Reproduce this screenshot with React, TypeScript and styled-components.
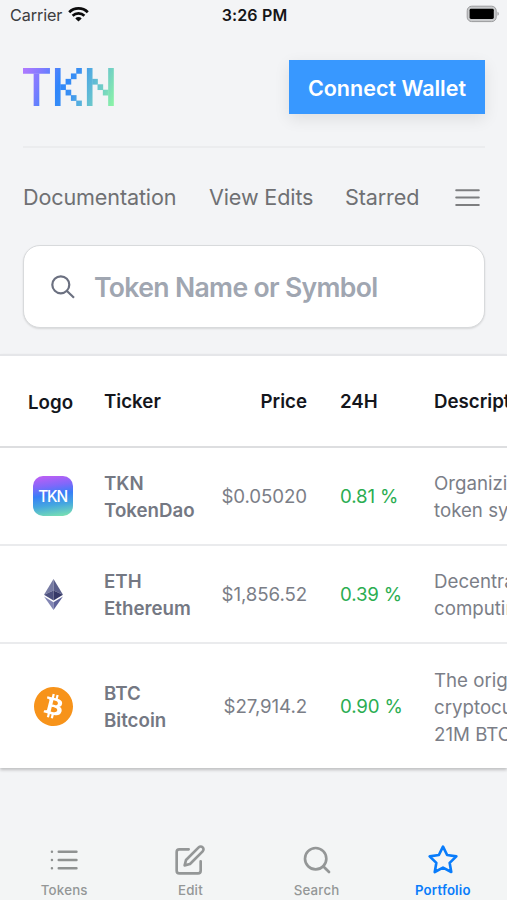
import React from "react";
import styled, { createGlobalStyle } from "styled-components";
import { FiEdit, FiSearch, FiStar } from "react-icons/fi";
import { SiBitcoin } from "react-icons/si";

const GlobalStyle = createGlobalStyle`
  *, *::before, *::after { box-sizing: border-box; }
  html, body { margin: 0; padding: 0; overflow: hidden; }
  body { background: #f3f4f6; font-family: Inter, "Liberation Sans", sans-serif; }
`;

const Screen = styled.div`
  width: 507px;
  height: 900px;
  display: flex;
  flex-direction: column;
  overflow: hidden;
  background: #f3f4f6;
`;

const StatusBar = styled.header`
  height: 30px;
  flex: none;
  display: grid;
  grid-template-columns: 1fr auto 1fr;
  align-items: center;
  padding: 0 8px 0 10px;
`;

const Carrier = styled.span`
  display: flex;
  align-items: center;
  gap: 6px;
  font-size: 16.2px;
  line-height: 20px;
  letter-spacing: -0.1px;
  color: #3c3d40;
`;

const Clock = styled.span`
  font-size: 16px;
  font-weight: 600;
  line-height: 20px;
  letter-spacing: 0.15px;
  color: #151517;
`;

const BatterySlot = styled.span`
  display: flex;
  justify-content: flex-end;
  margin-top: -2px;
`;

const TopArea = styled.section`
  flex: none;
  height: 324px;
  padding: 30px 22px 0 23px;
  display: flex;
  flex-direction: column;
`;

const Brand = styled.div`
  display: flex;
  justify-content: space-between;
  align-items: center;
  height: 54px;
`;

const ConnectButton = styled.button`
  width: 196px;
  height: 54px;
  padding: 2px 0 0;
  border: 0;
  background: #3898ff;
  box-shadow: 0 5px 15px rgba(0, 0, 0, 0.09);
  color: #fff;
  font: 600 21.5px/27px Inter, sans-serif;
  white-space: nowrap;
`;

const Rule = styled.hr`
  width: 100%;
  height: 2px;
  margin: 32px 0 0;
  border: 0;
  background: #ebecee;
`;

const Nav = styled.nav`
  display: flex;
  align-items: center;
  height: 32px;
  margin-top: 33px;
  padding-right: 4px;
`;

const NavLink = styled.a<{ $width: number }>`
  width: ${(p) => p.$width}px;
  font-size: 21.6px;
  line-height: 32px;
  color: #6f7073;
  letter-spacing: -0.14px;
  white-space: nowrap;
`;

const MenuButton = styled.span`
  display: flex;
  margin-left: auto;
  padding: 1px 1px 0 0;
`;

const SearchBox = styled.label`
  display: flex;
  align-items: center;
  height: 83px;
  margin-top: 32px;
  padding-left: 27px;
  gap: 19px;
  background: #fff;
  border: 1.5px solid #d8dadc;
  border-radius: 17px;
  box-shadow: 0 1px 2px rgba(0, 0, 0, 0.12);
`;

const SearchInput = styled.input`
  width: 340px;
  padding: 0;
  border: 0;
  outline: 0;
  background: transparent;
  font: 600 26.6px/36px Inter, sans-serif;
  letter-spacing: -0.66px;
  &::placeholder { color: #a0a6b1; opacity: 1; }
`;

const Table = styled.section`
  flex: none;
  border-top: 2px solid #e5e6e9;
  background: #fff;
  box-shadow: 0 2px 3px rgba(0, 0, 0, 0.22);
`;

const Row = styled.div<{ $height: number; $line?: string }>`
  display: grid;
  grid-template-columns: 104px 110px 93px 94px 190px;
  align-items: center;
  height: ${(p) => p.$height}px;
  border-bottom: ${(p) => (p.$line ? `2px solid ${p.$line}` : "0")};
  font-size: 18.7px;
  line-height: 27px;
  color: #7b7e87;
  white-space: nowrap;
`;

const HeadCell = styled.span<{ $kind?: "logo" | "price" | "change" }>`
  color: #14161c;
  font-weight: 600;
  text-align: ${(p) => (p.$kind === "price" ? "right" : "left")};
  padding-left: ${(p) => (p.$kind === "logo" ? 28 : p.$kind === "change" ? 33 : 0)}px;
  padding-top: ${(p) => (p.$kind === "logo" ? 2 : 0)}px;
`;

const LogoCell = styled.span`
  display: flex;
  justify-content: center;
  width: 106px;
`;

const Ticker = styled.span`
  display: flex;
  flex-direction: column;
  padding-top: 2px;
  font-weight: 600;
  color: #747883;
`;

const Price = styled.span`
  text-align: right;
  letter-spacing: -0.1px;
`;

const Change = styled.span`
  padding-left: 33px;
  color: #2bad51;
  letter-spacing: -0.15px;
`;

const Description = styled.span`
  padding: 2px 0 0 33px;
  white-space: pre;
`;

const TabBar = styled.nav`
  flex: none;
  display: grid;
  grid-template-columns: repeat(4, 126.2px);
  justify-content: center;
  height: 60px;
  margin-top: auto;
  background: #f3f5f5;
`;

const Tab = styled.a<{ $active?: boolean }>`
  display: flex;
  flex-direction: column;
  align-items: center;
  padding-top: 3px;
  color: ${(p) => (p.$active ? "#087cfb" : "#949797")};
  font-size: ${(p) => (p.$active ? 13.2 : 13.3)}px;
  font-weight: ${(p) => (p.$active ? 600 : 500)};
  line-height: 16px;
  letter-spacing: 0.2px;
`;

const TabIcon = styled.span`
  display: flex;
  align-items: center;
  justify-content: center;
  height: 33px;
  margin-bottom: 6px;
`;

/* Filled cells of the wordmark on a 17 by 7 grid: column, row, width, height. */
const LOGO_CELLS = [
  [0, 0, 5, 1], [2, 1, 1, 6],
  [6, 0, 1, 7], [10, 0, 1, 1], [9, 1, 1, 1], [8, 2, 1, 1], [7, 3, 1, 1],
  [8, 4, 1, 1], [9, 5, 1, 1], [10, 6, 1, 1],
  [12, 0, 1, 7], [13, 2, 1, 1], [14, 3, 1, 1], [15, 4, 1, 1], [16, 0, 1, 7],
];

const Wordmark = () => (
  <svg width="90.5" height="38" viewBox="0 0 17 7" preserveAspectRatio="none" aria-label="TKN">
    <defs>
      <linearGradient id="mark" x1="0" y1="0" x2="17" y2="7" gradientUnits="userSpaceOnUse">
        <stop offset="0" stopColor="#b279ff" />
        <stop offset="0.2" stopColor="#7d7cff" />
        <stop offset="0.4" stopColor="#2f86fb" />
        <stop offset="0.55" stopColor="#3a90f2" />
        <stop offset="0.65" stopColor="#52ace0" />
        <stop offset="0.82" stopColor="#70cdc7" />
        <stop offset="1" stopColor="#8cf5a5" />
      </linearGradient>
    </defs>
    {LOGO_CELLS.map(([x, y, w, h]) => (
      <rect key={`${x}-${y}`} x={x} y={y} width={w + 0.06} height={h + 0.06} fill="url(#mark)" />
    ))}
  </svg>
);

const TokenBadge = styled.span`
  display: flex;
  align-items: center;
  justify-content: center;
  width: 40px;
  height: 40px;
  border-radius: 10px;
  background: linear-gradient(172deg, #b660f5 6%, #8068fa 27%, #377ff7 47%, #45a7df 70%, #7be3b0 98%);
  color: #fff;
  font-size: 15.4px;
  font-weight: 500;
  letter-spacing: -1.2px;
  text-indent: -1px;
`;

const Ethereum = () => (
  <svg width="19" height="31" viewBox="0 0 19 31">
    <path d="M9.5 0 0 15.7l9.5-4.3z" fill="#777ba3" />
    <path d="M9.5 0 19 15.7l-9.5-4.3z" fill="#5a5e8a" />
    <path d="m0 15.7 9.5 5.7v-10z" fill="#4d517f" />
    <path d="m19 15.7-9.5 5.7v-10z" fill="#363967" />
    <path d="m0 17.6 9.5 5.6V31z" fill="#8286b4" />
    <path d="m19 17.6-9.5 5.6V31z" fill="#5f639a" />
  </svg>
);

const BitcoinDisc = styled.span`
  display: flex;
  border-radius: 50%;
  background: radial-gradient(circle, #fff 60%, transparent 62%);
  color: #f7931a;
`;

const Wifi = () => (
  <svg width="21" height="16" viewBox="0 0 21 16" fill="none" stroke="#0b0b0c">
    <path d="M1.2 5.2a13.3 13.3 0 0 1 18.6 0" strokeWidth="2.8" />
    <path d="M4.6 8.8a8.4 8.4 0 0 1 11.8 0" strokeWidth="2.6" />
    <path d="m10.5 14.6-3.2-3.2a4.6 4.6 0 0 1 6.4 0z" fill="#0b0b0c" stroke="none" />
  </svg>
);

const Battery = () => (
  <svg width="33" height="18" viewBox="0 0 33 18">
    <rect x="1.2" y="1.2" width="29" height="15.4" rx="4.5" fill="#c9cacc" stroke="#9b9c9e" />
    <rect x="3.6" y="3.8" width="24.2" height="10.2" rx="1.4" fill="#000" />
    <path d="M31.4 6.7q1.6.3 1.6 2t-1.6 2z" fill="#a9aaac" />
  </svg>
);

const MenuIcon = () => (
  <svg width="25" height="18" viewBox="0 0 25 18" stroke="#7d7e80" strokeWidth="2" strokeLinecap="round">
    <path d="M1.2 1.2h22.6M1.2 8.6h22.6M1.2 16h22.6" />
  </svg>
);

const Magnifier = () => (
  <svg width="24" height="24" viewBox="0 0 24 24" fill="none" stroke="#6b7080" strokeWidth="2.2">
    <circle cx="9.8" cy="9.8" r="8.5" />
    <path d="m15.7 15.8 7.3 7" />
  </svg>
);

const ListIcon = () => (
  <svg width="28" height="20" viewBox="0 0 28 20" stroke="#8f9291" strokeWidth="2.4" strokeLinecap="round">
    <path d="M8.7 1.8h17.8M8.7 10h17.8M8.7 18.2h17.8M1.9 1.8h.1M1.9 10h.1M1.9 18.2h.1" />
  </svg>
);

const tokens = [
  {
    symbol: "TKN", name: "TokenDao", price: "$0.05020", change: "0.81 %",
    description: "Organizing\ntoken symbols", height: 98, line: "#eaebed",
    logo: <TokenBadge>TKN</TokenBadge>,
  },
  {
    symbol: "ETH", name: "Ethereum", price: "$1,856.52", change: "0.39 %",
    description: "Decentralized\ncomputing", height: 98, line: "#eaebed", logo: <Ethereum />,
  },
  {
    symbol: "BTC", name: "Bitcoin", price: "$27,914.2", change: "0.90 %",
    description: "The original\ncryptocurrency\n21M BTC", height: 124, line: undefined,
    logo: <BitcoinDisc><SiBitcoin size={39} /></BitcoinDisc>,
  },
];

const tabs = [
  { label: "Tokens", icon: <ListIcon /> },
  { label: "Edit", icon: <FiEdit size={32} /> },
  { label: "Search", icon: <FiSearch size={32} /> },
  { label: "Portfolio", icon: <FiStar size={32} />, active: true },
];

export default function App() {
  return (
    <>
      <GlobalStyle />
      <Screen>
        <StatusBar>
          <Carrier>Carrier <Wifi /></Carrier>
          <Clock>3:26 PM</Clock>
          <BatterySlot><Battery /></BatterySlot>
        </StatusBar>
        <TopArea>
          <Brand>
            <Wordmark />
            <ConnectButton>Connect Wallet</ConnectButton>
          </Brand>
          <Rule />
          <Nav>
            <NavLink $width={186}>Documentation</NavLink>
            <NavLink $width={136}>View Edits</NavLink>
            <NavLink $width={76}>Starred</NavLink>
            <MenuButton><MenuIcon /></MenuButton>
          </Nav>
          <SearchBox>
            <Magnifier />
            <SearchInput placeholder="Token Name or Symbol" />
          </SearchBox>
        </TopArea>
        <Table>
          <Row $height={92} $line="#dddee0">
            <HeadCell $kind="logo">Logo</HeadCell>
            <HeadCell>Ticker</HeadCell>
            <HeadCell $kind="price">Price</HeadCell>
            <HeadCell $kind="change">24H</HeadCell>
            <HeadCell $kind="change">Description</HeadCell>
          </Row>
          {tokens.map((t) => (
            <Row key={t.symbol} $height={t.height} $line={t.line}>
              <LogoCell>{t.logo}</LogoCell>
              <Ticker><span>{t.symbol}</span><span>{t.name}</span></Ticker>
              <Price>{t.price}</Price>
              <Change>{t.change}</Change>
              <Description>{t.description}</Description>
            </Row>
          ))}
        </Table>
        <TabBar>
          {tabs.map((t) => (
            <Tab key={t.label} $active={t.active}>
              <TabIcon>{t.icon}</TabIcon>
              {t.label}
            </Tab>
          ))}
        </TabBar>
      </Screen>
    </>
  );
}
